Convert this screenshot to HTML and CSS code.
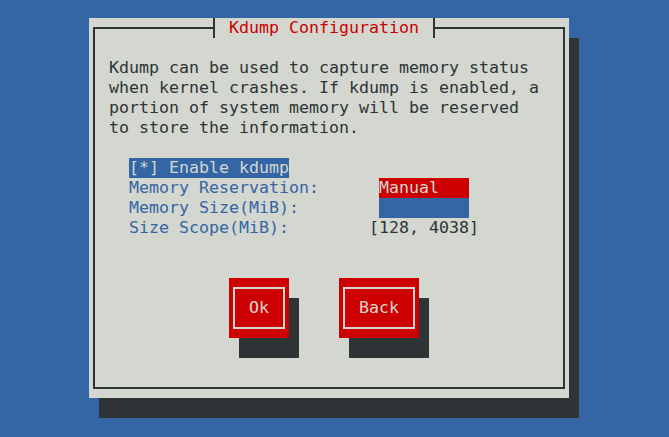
FILE: index.html
```html
<!DOCTYPE html>
<html lang="en">
<head>
<meta charset="utf-8">
<title>Kdump Configuration</title>
<link rel="stylesheet" href="styles.css">
</head>
<body>
<div class="window">
  <div class="frame">
    <div class="title">Kdump Configuration</div>
    <p class="intro">Kdump can be used to capture memory status
when kernel crashes. If kdump is enabled, a
portion of system memory will be reserved
to store the information.</p>
    <div class="form">
      <span class="check">[*] Enable kdump</span>
      <span class="label">Memory Reservation:</span>
      <span class="entry entry-red">Manual</span>
      <span class="label">Memory Size(MiB):</span>
      <span class="entry entry-blue"></span>
      <span class="label">Size Scope(MiB):</span>
      <span class="scope">[128, 4038]</span>
    </div>
    <div class="buttons">
      <button class="btn btn-ok" type="button"><span class="btn-inner">Ok</span></button>
      <button class="btn btn-back" type="button"><span class="btn-inner">Back</span></button>
    </div>
  </div>
</div>
</body>
</html>
```
FILE: styles.css
```css
html, body {
  margin: 0;
}
body {
  width: 669px;
  height: 437px;
  overflow: hidden;
  box-sizing: border-box;
  padding: 18px 0 0 89px;
  background: #3465a4;
  font-family: "DejaVu Sans Mono", "Liberation Mono", monospace;
  font-size: 16.61px;
  line-height: 20px;
  color: #2e3436;
}
.window {
  width: 480px;
  height: 380px;
  box-sizing: border-box;
  padding: 9px 4px;
  background: #d3d7cf;
  box-shadow: 10px 20px 0 #2e3436;
}
.frame {
  position: relative;
  height: 100%;
  box-sizing: border-box;
  border: 2px solid #2e3436;
  padding: 29px 14px 0;
}
.title {
  position: absolute;
  top: -11px;
  left: 118px;
  height: 20px;
  padding: 0 14px;
  border-left: 2px solid #2e3436;
  border-right: 2px solid #2e3436;
  background: #d3d7cf;
  color: #cc0000;
  white-space: pre;
}
.intro {
  margin: 0;
  white-space: pre;
  color: #2e3436;
}
.form {
  margin: 20px 0 0 20px;
  display: grid;
  grid-template-columns: 240px max-content;
  grid-auto-rows: 20px;
  justify-items: start;
}
.check {
  grid-column: 1 / -1;
  background: #3465a4;
  color: #d3d7cf;
  white-space: pre;
}
.label {
  color: #3465a4;
  white-space: pre;
}
.entry {
  width: 90px;
  height: 20px;
  margin-left: 10px;
  color: #d3d7cf;
}
.entry-red {
  background: #cc0000;
}
.entry-blue {
  background: #3465a4;
}
.scope {
  color: #2e3436;
  white-space: pre;
}
.buttons {
  display: flex;
  gap: 50px;
  margin: 40px 0 0 120px;
}
.btn {
  display: block;
  margin: 0;
  height: 60px;
  box-sizing: border-box;
  padding: 9px 4px;
  border: 0;
  background: #cc0000;
  box-shadow: 10px 20px 0 #2e3436;
  font: inherit;
  color: #d3d7cf;
}
.btn-ok {
  width: 60px;
}
.btn-back {
  width: 80px;
}
.btn-inner {
  display: flex;
  align-items: center;
  justify-content: center;
  height: 100%;
  box-sizing: border-box;
  border: 2px solid #d3d7cf;
}
```
